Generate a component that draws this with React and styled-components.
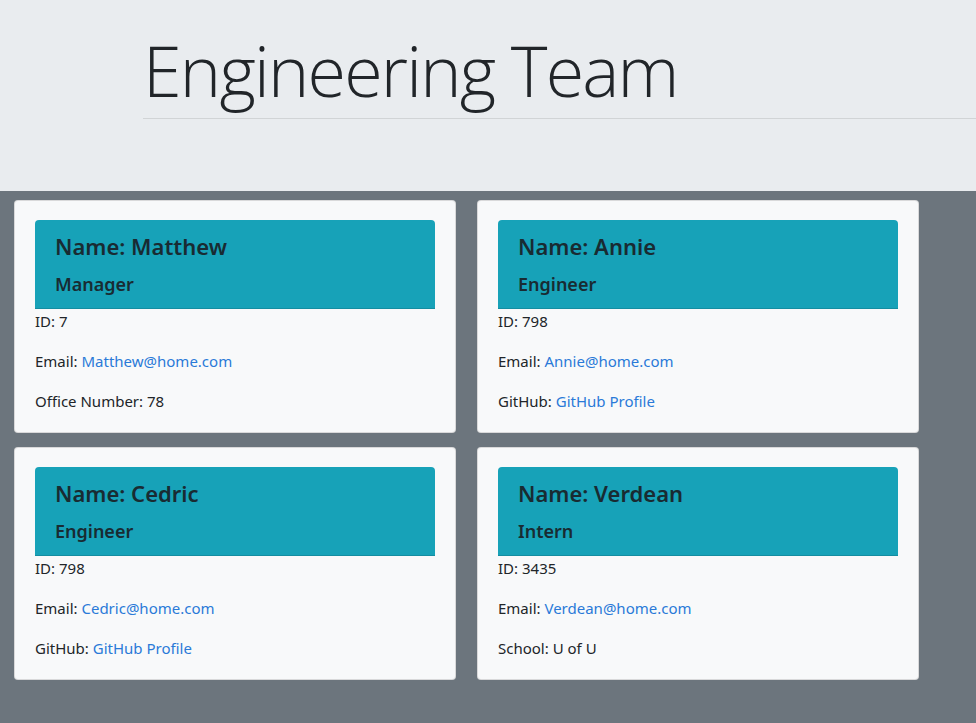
import React from "react";
import styled, { createGlobalStyle } from "styled-components";

const GlobalStyle = createGlobalStyle`
  html, body {
    margin: 0;
    padding: 0;
    background-color: #6c757d;
  }
  body {
    font-family: "Noto Sans", "Open Sans", "Liberation Sans", sans-serif;
    color: #212529;
    font-size: 16px;
    line-height: 1.5;
  }
`;

const Page = styled.div`
  min-height: 100vh;
  background-color: #6c757d;
  overflow: hidden;
`;

const Jumbotron = styled.header`
  background-color: #e9ecef;
  height: 191px;
  padding-left: 143px;
  padding-top: 28px;
  box-sizing: border-box;
`;

const Title = styled.h1`
  margin: 0;
  font-family: "Open Sans", "Noto Sans", sans-serif;
  font-weight: 300;
  font-size: 70px;
  line-height: 1.2;
  letter-spacing: -1.8px;
  color: #212529;
`;

const Divider = styled.hr`
  margin: 6px 0 0;
  border: 0;
  border-top: 1px solid rgba(0, 0, 0, 0.1);
`;

const CardGrid = styled.main`
  display: grid;
  grid-template-columns: repeat(2, 442px);
  column-gap: 21px;
  row-gap: 14px;
  padding: 9px 0 0 14px;
`;

const Card = styled.section`
  background-color: #f8f9fa;
  border: 1px solid rgba(0, 0, 0, 0.125);
  border-radius: 4px;
  padding: 19px 20px 4px;
  height: 233px;
  box-sizing: border-box;
`;

const CardHeader = styled.div`
  background-color: #17a2b8;
  border-radius: 4px 4px 0 0;
  border-bottom: 1px solid rgba(0, 0, 0, 0.125);
  padding: 12px 20px 4px;
  color: #192b32;
`;

const Name = styled.h4`
  margin: 0 0 12px;
  font-size: 22px;
  font-weight: 600;
  line-height: 1.3;
`;

const Role = styled.h5`
  margin: 0 0 8px;
  font-size: 18px;
  font-weight: 600;
  line-height: 1.3;
`;

const InfoLine = styled.p`
  margin: 0 0 16px;
  font-size: 15px;
  line-height: 24px;
`;

const InfoLink = styled.a`
  color: #2a7ad8;
  text-decoration: none;
`;

const employees = [
  {
    name: "Matthew",
    role: "Manager",
    id: 7,
    email: "Matthew@home.com",
    extra: { label: "Office Number", value: "78" },
  },
  {
    name: "Annie",
    role: "Engineer",
    id: 798,
    email: "Annie@home.com",
    extra: { label: "GitHub", link: "GitHub Profile" },
  },
  {
    name: "Cedric",
    role: "Engineer",
    id: 798,
    email: "Cedric@home.com",
    extra: { label: "GitHub", link: "GitHub Profile" },
  },
  {
    name: "Verdean",
    role: "Intern",
    id: 3435,
    email: "Verdean@home.com",
    extra: { label: "School", value: "U of U" },
  },
];

const EmployeeCard = ({ employee }) => (
  <Card>
    <CardHeader>
      <Name>Name: {employee.name}</Name>
      <Role>{employee.role}</Role>
    </CardHeader>
    <InfoLine>ID: {employee.id}</InfoLine>
    <InfoLine>
      Email: <InfoLink href="#">{employee.email}</InfoLink>
    </InfoLine>
    <InfoLine>
      {employee.extra.label}:{" "}
      {employee.extra.link ? (
        <InfoLink href="#">{employee.extra.link}</InfoLink>
      ) : (
        employee.extra.value
      )}
    </InfoLine>
  </Card>
);

const App = () => {
  return (
    <>
      <GlobalStyle />
      <Page>
        <Jumbotron>
          <Title>Engineering Team</Title>
          <Divider />
        </Jumbotron>
        <CardGrid>
          {employees.map((e) => (
            <EmployeeCard key={e.name} employee={e} />
          ))}
        </CardGrid>
      </Page>
    </>
  );
};

export default App;
